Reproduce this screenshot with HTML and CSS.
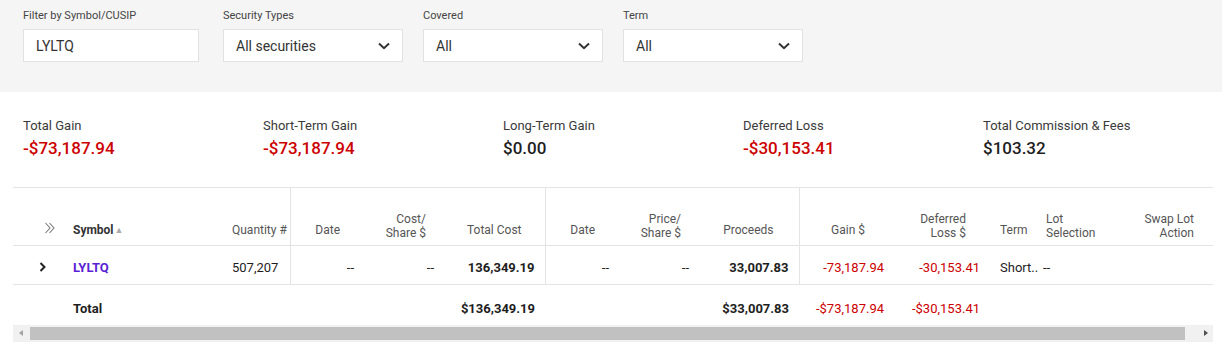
FILE: index.html
```html
<!DOCTYPE html>
<html lang="en">
<head>
  <meta charset="UTF-8" />
  <title>Realized Gain/Loss</title>
  <link rel="stylesheet" href="styles.css">
</head>
<body>
  <!-- Filters -->
  <div class="filters">
    <div class="filter first">
      <label>Filter by Symbol/CUSIP</label>
      <input type="text" value="LYLTQ" />
    </div>
    <div class="filter">
      <label>Security Types</label>
      <div class="select">All securities
        <svg width="12" height="8" viewBox="0 0 12 8"><path d="M1 1.5 L6 6.2 L11 1.5" fill="none" stroke="#333" stroke-width="2"/></svg>
      </div>
    </div>
    <div class="filter">
      <label>Covered</label>
      <div class="select">All
        <svg width="12" height="8" viewBox="0 0 12 8"><path d="M1 1.5 L6 6.2 L11 1.5" fill="none" stroke="#333" stroke-width="2"/></svg>
      </div>
    </div>
    <div class="filter">
      <label>Term</label>
      <div class="select">All
        <svg width="12" height="8" viewBox="0 0 12 8"><path d="M1 1.5 L6 6.2 L11 1.5" fill="none" stroke="#333" stroke-width="2"/></svg>
      </div>
    </div>
  </div>

  <!-- Summary -->
  <div class="summary">
    <div class="stat">
      <div class="stat-label">Total Gain</div>
      <div class="stat-value neg">-$73,187.94</div>
    </div>
    <div class="stat">
      <div class="stat-label">Short-Term Gain</div>
      <div class="stat-value neg">-$73,187.94</div>
    </div>
    <div class="stat">
      <div class="stat-label">Long-Term Gain</div>
      <div class="stat-value">$0.00</div>
    </div>
    <div class="stat">
      <div class="stat-label">Deferred Loss</div>
      <div class="stat-value neg">-$30,153.41</div>
    </div>
    <div class="stat">
      <div class="stat-label">Total Commission &amp; Fees</div>
      <div class="stat-value">$103.32</div>
    </div>
  </div>

  <!-- Lots table -->
  <div class="table-wrap">
    <table class="lots">
      <colgroup>
        <col style="width:50px"><col style="width:159px"><col style="width:68px">
        <col style="width:74px"><col style="width:80px"><col style="width:101px">
        <col style="width:74px"><col style="width:80px"><col style="width:100px">
        <col style="width:95px"><col style="width:96px"><col style="width:52px">
        <col style="width:68px"><col style="width:103px">
      </colgroup>
      <thead>
        <tr>
          <th class="expand-all one">
            <svg width="12" height="12" viewBox="0 0 12 12"><path d="M1.5 1 L6 6 L1.5 11 M5.5 1 L10 6 L5.5 11" fill="none" stroke="#777" stroke-width="1.1"/></svg>
          </th>
          <th class="sym one">Symbol<span class="sort">&#9650;</span></th>
          <th class="qty sep one">Quantity #</th>
          <th class="one">Date</th>
          <th class="pr18">Cost/<br>Share $</th>
          <th class="sep pr23 one">Total Cost</th>
          <th class="one">Date</th>
          <th class="pr18">Price/<br>Share $</th>
          <th class="sep pr25 one">Proceeds</th>
          <th class="pr29 one">Gain $</th>
          <th>Deferred<br>Loss $</th>
          <th class="term one">Term</th>
          <th class="lot">Lot<br>Selection</th>
          <th class="pr19">Swap Lot<br>Action</th>
        </tr>
      </thead>
      <tbody>
        <tr>
          <td class="expand">
            <svg width="8" height="10" viewBox="0 0 8 10"><path d="M1.5 1 L5.5 5 L1.5 9" fill="none" stroke="#222" stroke-width="2"/></svg>
          </td>
          <td class="sym"><a class="symbol-link">LYLTQ</a></td>
          <td class="qty sep">507,207</td>
          <td>--</td>
          <td>--</td>
          <td class="sep strong">136,349.19</td>
          <td>--</td>
          <td>--</td>
          <td class="sep strong">33,007.83</td>
          <td class="neg">-73,187.94</td>
          <td class="neg">-30,153.41</td>
          <td class="term">Short..</td>
          <td class="lot">--</td>
          <td></td>
        </tr>
        <tr class="total">
          <td></td>
          <td class="sym strong">Total</td>
          <td></td>
          <td></td>
          <td></td>
          <td class="strong">$136,349.19</td>
          <td></td>
          <td></td>
          <td class="strong">$33,007.83</td>
          <td class="neg">-$73,187.94</td>
          <td class="neg">-$30,153.41</td>
          <td></td>
          <td></td>
          <td></td>
        </tr>
      </tbody>
    </table>

    <div class="hscroll">
      <div class="arrow left"></div>
      <div class="thumb"></div>
      <div class="arrow right"></div>
    </div>
  </div>
</body>
</html>
```

FILE: styles.css
```css
body {
  margin: 0;
  font-family: Roboto, 'Liberation Sans', sans-serif;
  color: #1e1e1e;
  background: #fff;
}

.filters {
  display: flex;
  background: #f5f5f5;
  padding: 9px 0 30px 23px;
}

.filter {
  width: 200px;
  flex-shrink: 0;
}

.filter label {
  display: block;
  font-size: 11px;
  line-height: 13px;
  color: #444;
  margin-bottom: 7px;
}

.filter input,
.select {
  box-sizing: border-box;
  height: 33px;
  width: 180px;
  background: #fff;
  border: 1px solid #e2e2e2;
  font-family: inherit;
  font-size: 14px;
  color: #333;
  padding: 0 12px;
  margin: 0;
}

.filter.first input {
  width: 176px;
}

.select {
  display: flex;
  align-items: center;
  justify-content: space-between;
}

.summary {
  display: flex;
  padding: 26px 0 29px 23px;
}

.stat {
  width: 240px;
  flex-shrink: 0;
}

.stat-label {
  font-size: 13px;
  line-height: 16px;
  color: #3a3a3a;
}

.stat-value {
  margin-top: 4px;
  font-size: 17px;
  line-height: 20px;
  font-weight: 500;
  color: #1e1e1e;
}

.neg {
  color: #cc0000;
}

.stat-value.neg {
  color: #cc0000;
}

.table-wrap {
  width: 1200px;
  margin-left: 13px;
}

.lots {
  width: 1200px;
  table-layout: fixed;
  border-collapse: collapse;
  border-top: 1px solid #e4e4e4;
}

.lots th {
  height: 58px;
  box-sizing: border-box;
  padding: 18px 24px 0 0;
  font-size: 12px;
  line-height: 14px;
  font-weight: normal;
  color: #555;
  text-align: right;
  vertical-align: middle;
  border-bottom: 1px solid #e4e4e4;
  white-space: nowrap;
}

.lots th.one {
  padding-top: 26px;
}

.lots td {
  height: 39px;
  box-sizing: border-box;
  padding: 5px 10px 0;
  font-size: 13px;
  text-align: right;
  vertical-align: middle;
  border-bottom: 1px solid #e4e4e4;
  white-space: nowrap;
  overflow: visible;
}

.lots .sep {
  border-right: 1px solid #e4e4e4;
}

.lots .total td {
  border-bottom: none;
  height: 40px;
  padding-top: 7px;
}

.lots th.pr18 { padding-right: 18px; }
.lots th.pr19 { padding-right: 19px; }
.lots th.pr23 { padding-right: 23px; }
.lots th.pr25 { padding-right: 25px; }
.lots th.pr29 { padding-right: 29px; }

.lots th.expand-all {
  text-align: left;
  padding-left: 31px;
  padding-right: 0;
}

.lots td.expand {
  text-align: left;
  padding-left: 26px;
  padding-right: 0;
}

.lots .sym {
  text-align: left;
  padding-left: 10px;
}

.lots th.sym {
  font-weight: bold;
  color: #333;
}

.sort {
  font-size: 9px;
  color: #aaa;
  margin-left: 1px;
  vertical-align: 1px;
}

.symbol-link {
  color: #5b1fd6;
  font-weight: bold;
  font-size: 13px;
}

.lots .qty {
  text-align: left;
  padding-left: 10px;
  padding-right: 0;
}

.lots .term {
  text-align: left;
  padding-left: 10px;
  padding-right: 0;
}

.lots .lot {
  text-align: left;
  padding-left: 4px;
  padding-right: 0;
}

.lots td.lot {
  padding-left: 1px;
}

.strong {
  font-weight: bold;
}

.lots .total .sym {
  font-weight: bold;
}

.hscroll {
  display: flex;
  align-items: center;
  height: 17px;
  background: #f1f1f1;
}

.hscroll .arrow {
  width: 17px;
  height: 17px;
  position: relative;
}

.hscroll .arrow::after {
  content: "";
  position: absolute;
  top: 5px;
  border-top: 3.5px solid transparent;
  border-bottom: 3.5px solid transparent;
}

.hscroll .left::after {
  left: 6px;
  border-right: 4px solid #a3a3a3;
}

.hscroll .right::after {
  left: 8px;
  border-left: 4px solid #505050;
}

.hscroll .thumb {
  width: 1155px;
  height: 13px;
  background: #c1c1c1;
  margin-right: 11px;
}
```
